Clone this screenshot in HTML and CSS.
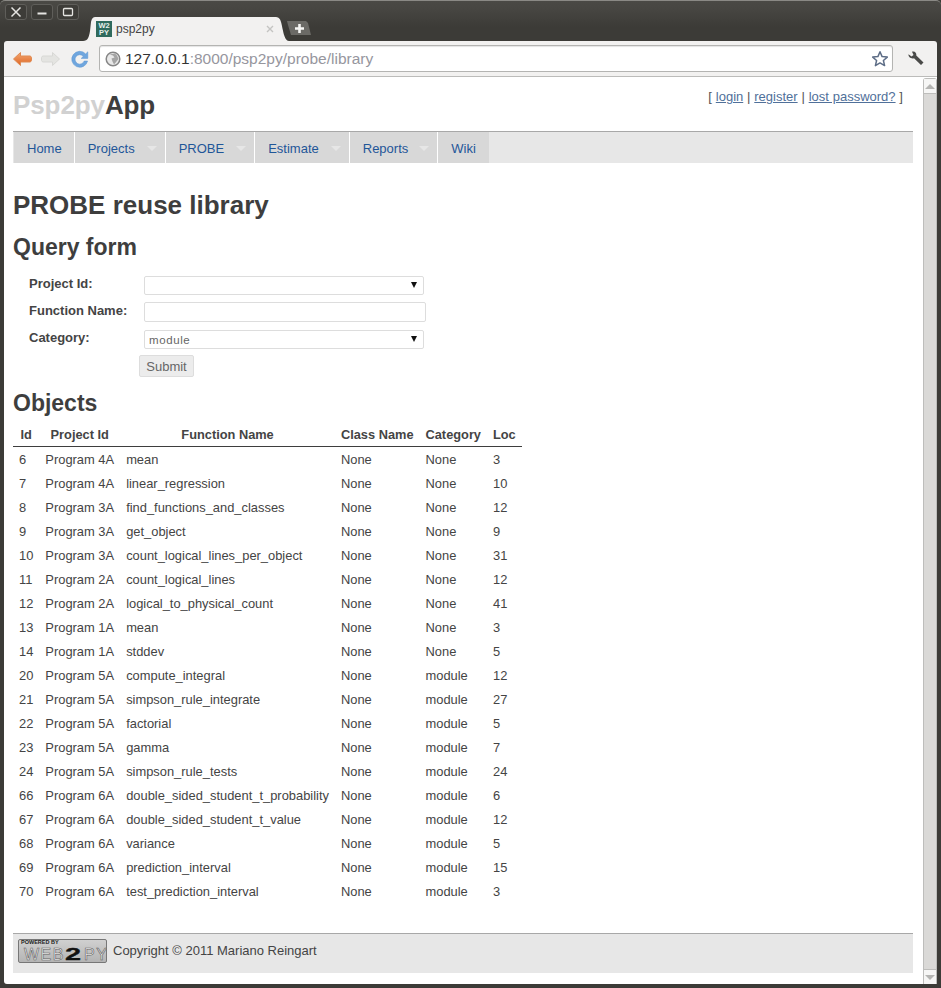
FILE: index.html
```html
<!DOCTYPE html>
<html lang="en">
<head>
<meta charset="utf-8">
<title>psp2py</title>
<link rel="stylesheet" href="styles.css">
</head>
<body>
<div class="window">
  <div class="titlebar">
    <div class="winbtns">
      <span class="winbtn"><svg width="12" height="12" viewBox="0 0 12 12"><path d="M1.500 1.500l9 9M10.500 1.500l-9 9" stroke="#e6e5e2" stroke-width="1.500" fill="none"/></svg></span>
      <span class="winbtn"><svg width="12" height="12" viewBox="0 0 12 12"><path d="M1.500 7.500h9" stroke="#e6e5e2" stroke-width="2" fill="none"/></svg></span>
      <span class="winbtn"><svg width="12" height="12" viewBox="0 0 12 12"><rect x="1.500" y="2.500" width="9" height="7" rx="1" stroke="#e6e5e2" stroke-width="1.300" fill="none"/></svg></span>
    </div>
    <div class="tab">
      <span class="favicon"><span>W2</span><span>PY</span></span>
      <span class="tabtitle">psp2py</span>
      <svg class="tabclose" width="8" height="8" viewBox="0 0 8 8"><path d="M1 1l6 6M7 1l-6 6" stroke="#c4c4c2" stroke-width="1.400"/></svg>
    </div>
    <div class="newtab"><svg width="9" height="9" viewBox="0 0 9 9"><path d="M4.500 0v9M0 4.500h9" stroke="#f6f6f4" stroke-width="2.600"/></svg></div>
  </div>
  <div class="toolbar">
    <svg class="navicon back" width="22" height="18" viewBox="0 0 22 18"><defs><linearGradient id="backfill" x1="0" y1="0" x2="0" y2="1"><stop offset="0" stop-color="#f3a873"/><stop offset="1" stop-color="#de6522"/></linearGradient></defs><path d="M8.500 2.500L1.500 9l7 6.500V12h9.500a2 2 0 0 0 1.500-1.500v-3A2 2 0 0 0 18 6H8.500z" fill="url(#backfill)" stroke="#e08a52" stroke-width="1" stroke-linejoin="round"/></svg>
    <svg class="navicon fwd" width="22" height="18" viewBox="0 0 22 18"><path d="M12.500 2.500L19.500 9l-7 6.500V12H3a2 2 0 0 1-1.500-1.500v-3A2 2 0 0 1 3 6h9.500z" fill="#e4e4e1" stroke="#d8d8d5" stroke-width="1" stroke-linejoin="round"/></svg>
    <svg class="navicon reload" width="18" height="18" viewBox="0 0 18 18"><path d="M13.200 11A4.700 4.700 0 1 1 12.300 6.300L10.200 8.400H16.800V1.800L14.700 3.900A8 8 0 1 0 16.600 11z" fill="#6fa6de" stroke="#5c95d0" stroke-width=".5"/></svg>
    <div class="omnibox">
      <svg class="globe" width="16" height="16" viewBox="0 0 16 16"><circle cx="8" cy="8" r="6.800" fill="#e8e8e8" stroke="#868686" stroke-width="1.500"/><path d="M4.500 3.500l3.500 1 1.500 2-3 1 1 3 1.500 3 2.500-3 2-2.500-1.500-3.500-2-2z" fill="#a4a4a4"/></svg>
      <span class="url"><span class="host">127.0.0.1</span>:8000/psp2py/probe/library</span>
      <svg class="star" width="18" height="18" viewBox="0 0 18 18"><path d="M9 1.800l2.100 4.800 5.200.5-3.900 3.400 1.200 5.100L9 12.900l-4.600 2.700 1.200-5.100-3.900-3.400 5.200-.5z" fill="#fff" stroke="#5d6d86" stroke-width="1.500" stroke-linejoin="round"/></svg>
    </div>
    <svg class="wrench" width="18" height="18" viewBox="0 0 18 18"><path d="M1.500 4.200L4.500 6.500 6.500 5 5 1.800C7.500.8 9.800 2.800 9.300 5.500L16.500 12.500 14 15 7 8.200C4 9 1.200 7 1.500 4.200z" fill="#4a4a48"/></svg>
  </div>
  <div class="viewport">
    <div class="page">
      <header class="header">
        <h1 class="brand"><span class="brand-light">Psp2py</span>App</h1>
        <div class="auth">[ <a href="#">login</a> | <a href="#">register</a> | <a href="#">lost password?</a> ]</div>
      </header>
      <nav class="nav">
        <a class="navitem first" href="#">Home</a>
        <a class="navitem has-sub" href="#">Projects</a>
        <a class="navitem has-sub" href="#">PROBE</a>
        <a class="navitem has-sub" href="#">Estimate</a>
        <a class="navitem has-sub tight" href="#">Reports</a>
        <a class="navitem last" href="#">Wiki</a>
      </nav>
      <main class="main">
        <h2 class="title">PROBE reuse library</h2>
        <h3 class="section">Query form</h3>
        <form class="form">
          <label class="lbl">Project Id:</label>
          <div class="selwrap"><select class="sel"><option></option></select></div>
          <label class="lbl">Function Name:</label>
          <input class="txt" type="text">
          <label class="lbl">Category:</label>
          <div class="selwrap"><select class="sel"><option>module</option></select></div>
          <span></span>
          <button class="submit" type="button">Submit</button>
        </form>
        <h3 class="section objects">Objects</h3>
        <table class="tbl">
          <thead><tr><th>Id</th><th>Project Id</th><th>Function Name</th><th>Class Name</th><th>Category</th><th>Loc</th></tr></thead>
          <tbody>
            <tr><td>6</td><td>Program 4A</td><td>mean</td><td>None</td><td>None</td><td>3</td></tr>
            <tr><td>7</td><td>Program 4A</td><td>linear_regression</td><td>None</td><td>None</td><td>10</td></tr>
            <tr><td>8</td><td>Program 3A</td><td>find_functions_and_classes</td><td>None</td><td>None</td><td>12</td></tr>
            <tr><td>9</td><td>Program 3A</td><td>get_object</td><td>None</td><td>None</td><td>9</td></tr>
            <tr><td>10</td><td>Program 3A</td><td>count_logical_lines_per_object</td><td>None</td><td>None</td><td>31</td></tr>
            <tr><td>11</td><td>Program 2A</td><td>count_logical_lines</td><td>None</td><td>None</td><td>12</td></tr>
            <tr><td>12</td><td>Program 2A</td><td>logical_to_physical_count</td><td>None</td><td>None</td><td>41</td></tr>
            <tr><td>13</td><td>Program 1A</td><td>mean</td><td>None</td><td>None</td><td>3</td></tr>
            <tr><td>14</td><td>Program 1A</td><td>stddev</td><td>None</td><td>None</td><td>5</td></tr>
            <tr><td>20</td><td>Program 5A</td><td>compute_integral</td><td>None</td><td>module</td><td>12</td></tr>
            <tr><td>21</td><td>Program 5A</td><td>simpson_rule_integrate</td><td>None</td><td>module</td><td>27</td></tr>
            <tr><td>22</td><td>Program 5A</td><td>factorial</td><td>None</td><td>module</td><td>5</td></tr>
            <tr><td>23</td><td>Program 5A</td><td>gamma</td><td>None</td><td>module</td><td>7</td></tr>
            <tr><td>24</td><td>Program 5A</td><td>simpson_rule_tests</td><td>None</td><td>module</td><td>24</td></tr>
            <tr><td>66</td><td>Program 6A</td><td>double_sided_student_t_probability</td><td>None</td><td>module</td><td>6</td></tr>
            <tr><td>67</td><td>Program 6A</td><td>double_sided_student_t_value</td><td>None</td><td>module</td><td>12</td></tr>
            <tr><td>68</td><td>Program 6A</td><td>variance</td><td>None</td><td>module</td><td>5</td></tr>
            <tr><td>69</td><td>Program 6A</td><td>prediction_interval</td><td>None</td><td>module</td><td>15</td></tr>
            <tr><td>70</td><td>Program 6A</td><td>test_prediction_interval</td><td>None</td><td>module</td><td>3</td></tr>
          </tbody>
        </table>
      </main>
      <footer class="footer">
        <span class="badge"><span class="badge-top">POWERED BY</span><span class="badge-logo">WEB<b>2</b>PY</span></span>
        <span>Copyright © 2011 Mariano Reingart</span>
      </footer>
    </div>
    <div class="scrollbar">
      <span class="sb-btn"><i class="tri up"></i></span>
      <span class="sb-track"></span>
      <span class="sb-btn"><i class="tri down"></i></span>
    </div>
  </div>
</div>
</body>
</html>
```
FILE: styles.css
```css
* { box-sizing: border-box; }
html, body { margin: 0; height: 100%; background: #3c3b37; }
body { font-family: "Liberation Sans", Arial, sans-serif; color: #444; overflow: hidden; }
.window { width: 941px; height: 988px; display: flex; flex-direction: column; background: #3c3b37; border-radius: 5px 5px 0 0; }
.titlebar { height: 41px; flex: none; display: flex; align-items: flex-start; background: linear-gradient(#4a4945 0, #474642 8px, #3c3b37 26px); border-top: 1px solid #8a8985; border-radius: 5px 5px 0 0; }
.winbtns { display: flex; gap: 4px; margin: 3px 0 0 5px; width: 78px; flex: none; }
.winbtn { width: 22px; height: 16px; border: 1px solid #5f5e5a; border-radius: 3px; background: #3d3c38; display: flex; align-items: center; justify-content: center; }
.tab { width: 206px; height: 24px; margin-top: 16px; background: #f2f1f0; display: flex; align-items: center; padding-left: 13px; flex: none; clip-path: path("M0 24C5 24 6 20 7 14L8 5C9 1 10 0 13 0L192 0C195 0 197 1 198 5C200 12 201 24 206 24Z"); }
.favicon { width: 16px; height: 16px; background: #2f6a5d; color: #e8f0ec; font: bold 7.500px/7.500px "Liberation Sans", sans-serif; display: flex; flex-direction: column; align-items: center; justify-content: center; flex: none; }
.tabtitle { font-size: 12px; color: #444; margin-left: 4px; flex: 1; }
.tabclose { margin-right: 15px; }
.newtab { width: 24px; height: 14px; margin: 20px 0 0 -2px; background: #6b6a66; display: flex; align-items: center; justify-content: center; flex: none; clip-path: polygon(0 0, 19px 0, 21px 2px, 24px 14px, 4px 14px, 1px 4px); }
.toolbar { height: 36px; flex: none; margin: 0 4px; background: #f2f1f0; border-radius: 3px 3px 0 0; border-bottom: 1px solid #bcbcba; display: flex; align-items: center; padding: 0 0 0 8px; }
.navicon { flex: none; margin-right: 6px; }
.navicon.fwd { margin-right: 9px; }
.navicon.reload { margin-right: 10px; }
.omnibox { width: 794px; height: 27px; flex: none; background: #fff; border: 1px solid #b4b4b2; border-radius: 3px; display: flex; align-items: center; padding: 0 3px 0 5px; box-shadow: inset 0 1px 1px #e4e4e4; }
.globe { flex: none; margin-right: 4px; }
.url { font-size: 15.500px; color: #96969e; flex: 1; white-space: nowrap; }
.host { color: #333; }
.star { flex: none; }
.wrench { flex: none; margin-left: 14px; }
.viewport { flex: none; height: 907px; margin: 0 4px; background: #fff; display: flex; border-radius: 0 0 3px 3px; }
.page { width: 919px; flex: none; padding: 0 10px 0 9px; display: flex; flex-direction: column; }
.header { height: 55px; flex: none; display: flex; justify-content: space-between; align-items: flex-start; border-bottom: 1px solid #a8a8a8; }
.brand { margin: 12px 0 0; font-size: 26px; line-height: 32px; font-weight: bold; color: #3e3e3e; letter-spacing: -.1px; }
.brand-light { color: #d1d1d1; }
.auth { margin: 12px 10px 0 0; font-size: 13px; line-height: 15px; color: #555; word-spacing: .2px; }
.auth a { color: #50709a; }
.nav { height: 31px; flex: none; display: flex; background: #e7e7e7; padding-left: 1px; }
.navitem { font-size: 13px; color: #1f5698; text-decoration: none; padding: 0 13px; line-height: 33px; background: #d8d8d8; border-right: 1px solid #fff; position: relative; }
.navitem.first { padding-right: 12px; }
.navitem.last { border-right: 0; }
.navitem.has-sub { padding-right: 30px; }
.navitem.has-sub.tight { padding-right: 29px; }
.navitem.has-sub::after { content: ""; position: absolute; right: 8px; top: 14px; border: 5px solid transparent; border-top: 5px solid #e6e6e6; border-bottom: 0; }
.main { flex: none; height: 770px; }
.title { margin: 25px 0 0; font-size: 26px; line-height: 34px; font-weight: bold; color: #3e3e3e; }
.section { margin: 9px 0 0; font-size: 23px; line-height: 32px; font-weight: bold; color: #3e3e3e; }
.form { display: grid; grid-template-columns: 115px 290px; margin: 10px 0 0 16px; font-size: 13px; }
.lbl { font-size: 13px; font-weight: bold; color: #444; line-height: 15px; padding-top: 3px; height: 27px; }
.selwrap { width: 280px; height: 19px; margin-top: 3px; position: relative; }
.selwrap::after { content: ""; position: absolute; right: 7px; top: 6px; border-left: 3px solid transparent; border-right: 3px solid transparent; border-top: 6px solid #111; }
.sel { display: block; width: 100%; height: 100%; appearance: none; font: 11.500px "Liberation Sans", sans-serif; letter-spacing: .6px; color: #666; background: #fff; border: 1px solid #ddd; border-radius: 2px; padding: 1px 0 0 4px; }
.txt { width: 282px; height: 20px; margin-top: 2px; border: 1px solid #ddd; border-radius: 2px; background: #fff; padding: 0; }
.submit { grid-column: 2; width: 55px; height: 22px; margin: 1px 0 0 -5px; font: 13px "Liberation Sans", sans-serif; color: #666; background: #ececec; border: 1px solid #ddd; border-radius: 2px; padding: 0; }
.objects { margin-top: 10px; }
.tbl { border-collapse: collapse; margin-top: 5px; font-size: 12.900px; color: #444; }
.tbl th { font-weight: bold; font-size: 12.800px; height: 22px; padding: 0 6px 1px; border-bottom: 1px solid #3e3e3e; text-align: center; line-height: 15px; white-space: nowrap; }
.tbl td { height: 24px; padding: 0 6px; text-align: left; white-space: nowrap; }
.tbl tbody tr:first-child td { height: 25px; padding-top: 1px; }
.footer { height: 40px; flex: none; background: #e7e7e7; border-top: 1px solid #a8a8a8; display: flex; align-items: center; padding: 0 0 6px 5px; gap: 6px; font-size: 13px; color: #444; }
.badge { width: 89px; height: 24px; flex: none; border: 1px solid #777; border-radius: 2px; background: linear-gradient(#d0d0d0, #b4b4b4); position: relative; display: block; overflow: hidden; }
.badge-top { position: absolute; left: 2px; top: 0; font: bold 5.500px/5px "Liberation Sans", sans-serif; color: #222; white-space: nowrap; }
.badge-logo { position: absolute; left: 5px; top: 7px; font: 16px/16px "Liberation Sans", sans-serif; color: #f4f4f4; -webkit-text-stroke: .6px #5c5c5c; letter-spacing: 1.500px; white-space: nowrap; }
.badge-logo b { display: inline-block; width: 19px; color: #111; -webkit-text-stroke: .3px #111; letter-spacing: 0; font-weight: bold; transform: scaleX(1.8); transform-origin: 0 50%; }
.scrollbar { width: 14px; flex: none; display: flex; flex-direction: column; background: #dad9d7; border: 1px solid #bdbdbb; border-bottom: 0; border-radius: 3px 3px 0 0; margin-top: 1px; }
.sb-btn { height: 14px; flex: none; background: #f6f6f5; display: flex; align-items: center; justify-content: center; }
.sb-track { flex: 1; border-top: 1px solid #bdbdbb; border-bottom: 1px solid #bdbdbb; }
.tri { display: block; width: 0; height: 0; border-left: 5px solid transparent; border-right: 5px solid transparent; }
.tri.up { border-bottom: 5px solid #b5b5b3; }
.tri.down { border-top: 5px solid #b5b5b3; }
```
